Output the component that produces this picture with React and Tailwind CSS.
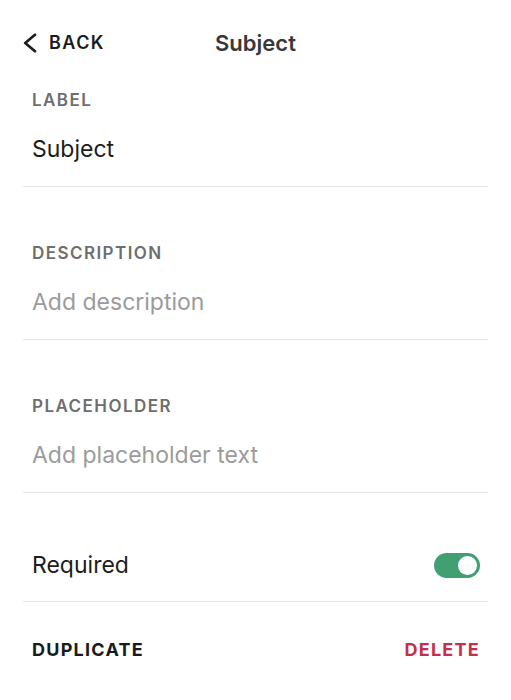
import { useState } from 'react'

function Field({ label, value, placeholder }) {
  return (
    <div className="px-[9px] pb-[23px] border-b border-[#e6e6e6]">
      <div className="text-[17px] leading-[20px] font-semibold tracking-[0.085em] text-[#6e6e6e]">{label}</div>
      <div className={`mt-[25px] text-[23px] leading-[28px] ${value ? 'text-[#1c1c1c]' : 'text-[#9b9b9b]'}`}>
        {value || placeholder}
      </div>
    </div>
  )
}

export default function App() {
  const [required, setRequired] = useState(true)

  return (
    <div className="w-[511px] h-[700px] bg-white font-['Inter',sans-serif] antialiased">
      {/* header */}
      <div className="grid grid-cols-[1fr_auto_1fr] items-center h-[56px] mt-[15px] px-[23px]">
        <button className="flex items-center gap-[12px] text-[#1c1c1c]">
          <svg width="14" height="20" viewBox="0 0 14 20" fill="none">
            <path d="M12 1.8 L2.2 10 L12 18.2" stroke="#1c1c1c" strokeWidth="2.7" strokeLinecap="round" strokeLinejoin="round" />
          </svg>
          <span className="text-[18px] leading-[24px] font-semibold tracking-[0.08em]">BACK</span>
        </button>
        <div className="text-[22px] leading-[28px] font-semibold text-[#383838]">Subject</div>
        <div />
      </div>

      <div className="px-[23px]">
        <div className="mt-[19px]">
          <Field label="LABEL" value="Subject" />
        </div>
        <div className="mt-[56px]">
          <Field label="DESCRIPTION" placeholder="Add description" />
        </div>
        <div className="mt-[56px]">
          <Field label="PLACEHOLDER" placeholder="Add placeholder text" />
        </div>

        <div className="flex items-center justify-between pl-[9px] pr-[8px] pt-[58px] pb-[22px] border-b border-[#e6e6e6]">
          <span className="text-[23px] leading-[28px] text-[#1c1c1c]">Required</span>
          <button
            onClick={() => setRequired(!required)}
            className={`flex items-center w-[46px] h-[25px] rounded-full px-[3px] ${required ? 'bg-[#41a071] justify-end' : 'bg-[#d4d4d4] justify-start'}`}
          >
            <span className="w-[19px] h-[19px] rounded-full bg-white" />
          </button>
        </div>

        <div className="flex items-center justify-between pl-[9px] pr-[8px] pt-[36px]">
          <button className="text-[18px] leading-[24px] font-bold tracking-[0.07em] text-[#1a1a1a]">DUPLICATE</button>
          <button className="text-[18px] leading-[24px] font-bold tracking-[0.07em] text-[#c4304a]">DELETE</button>
        </div>
      </div>
    </div>
  )
}
